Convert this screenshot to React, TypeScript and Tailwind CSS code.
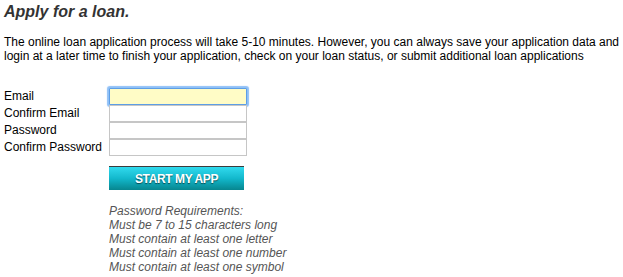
import React from "react";

export default function App() {
  const labels = ["Email", "Confirm Email", "Password", "Confirm Password"];
  const reqs = [
    "Password Requirements:",
    "Must be 7 to 15 characters long",
    "Must contain at least one letter",
    "Must contain at least one number",
    "Must contain at least one symbol",
  ];
  return (
    <div
      className="w-[623px] h-[277px] bg-white px-[4px] text-black overflow-hidden"
      style={{ fontFamily: '"Liberation Sans", Arial, Helvetica, sans-serif' }}
    >
      <h1 className="pt-[2px] text-[16px] leading-[20px] font-bold italic text-[#333333]">
        Apply for a loan.
      </h1>
      <p className="mt-[13px] text-[12px] leading-[14px] w-[622px]">
        The online loan application process will take 5-10 minutes. However, you can always save your
        application data and login at a later time to finish your application, check on your loan status, or
        submit additional loan applications
      </p>
      <div className="mt-[25px] flex">
        <div className="w-[105px] flex flex-col text-[12px]">
          {labels.map((l) => (
            <div key={l} className="h-[17px] leading-[17px]">
              {l}
            </div>
          ))}
        </div>
        <div className="flex flex-col">
          <div className="w-[138px] h-[17px] bg-[#fffcc6] border border-[#5d9ee6] shadow-[0_0_1px_2px_#8fc0f7] rounded-[1px]" />
          <div className="w-[138px] h-[17px] bg-white border border-[#c6c6c6]" />
          <div className="w-[138px] h-[17px] bg-white border border-[#c6c6c6]" />
          <div className="w-[138px] h-[17px] bg-white border border-[#c6c6c6]" />
          <div className="mt-[10px] w-[135px] h-[24px] border-t border-[#3c3c3c] bg-linear-to-b from-[#2fdaee] via-[#12b8cc] to-[#07868f] flex items-center justify-center">
            <span className="text-white font-bold text-[12px] tracking-[-0.4px] [text-shadow:0_1px_1px_rgba(0,0,0,0.55)]">
              START MY APP
            </span>
          </div>
          <div className="mt-[14px] text-[12px] leading-[14px] italic text-[#555555]">
            {reqs.map((r) => (
              <div key={r}>{r}</div>
            ))}
          </div>
        </div>
      </div>
    </div>
  );
}
